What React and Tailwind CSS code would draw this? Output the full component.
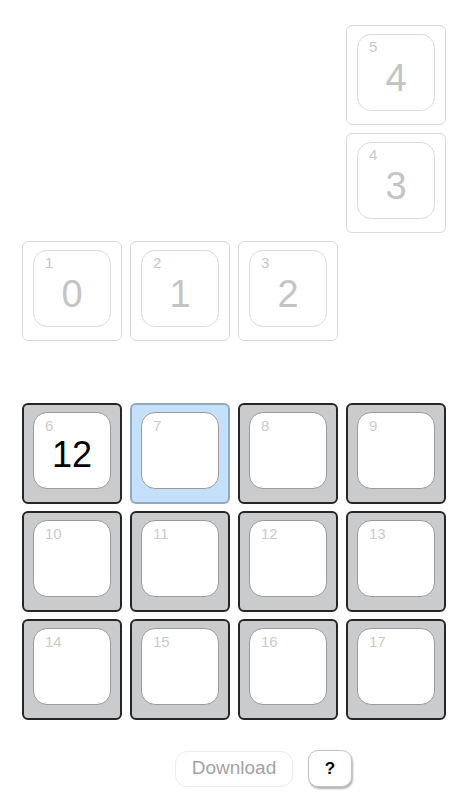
import React from 'react';

const font = { fontFamily: '"Liberation Sans", Arial, Helvetica, sans-serif' };

// faded placeholder tile (the ones above the board)
const GhostTile = ({ label, value }) => (
  <div className="w-[100px] h-[100px] rounded-[6px] border border-[#d9d9d9] bg-white px-[10px] pt-[8px]">
    <div className="relative w-full h-[77px] rounded-[14px] border border-[#dcdcdc] flex items-center justify-center pt-[10px]">
      <span className="absolute left-[11px] top-[4px] text-[15px] leading-none text-[#c9c9c9]">{label}</span>
      <span className="text-[38px] leading-none text-[#c4c4c4]">{value}</span>
    </div>
  </div>
);

// board cell
const Cell = ({ label, value, active }) => (
  <div
    className={`w-[100px] h-[101px] rounded-[6px] border-2 px-[9px] pt-[7px] ${
      active ? 'bg-[#c4e0fa] border-[#8ea9c4]' : 'bg-[#c9cbcc] border-[#262626]'
    }`}
  >
    <div className="relative w-full h-[77px] rounded-[14px] border border-[#9b9b9b] bg-white flex items-center justify-center pt-[9px]">
      <span className="absolute left-[11px] top-[5px] text-[15px] leading-none text-[#cbcbcb]">{label}</span>
      {value && <span className="text-[36px] leading-none text-black">{value}</span>}
    </div>
  </div>
);

export default function App() {
  const cells = [
    { label: 6, value: '12' },
    { label: 7, active: true },
    { label: 8 },
    { label: 9 },
    { label: 10 },
    { label: 11 },
    { label: 12 },
    { label: 13 },
    { label: 14 },
    { label: 15 },
    { label: 16 },
    { label: 17 },
  ];

  return (
    <div className="w-[472px] min-h-[800px] bg-white pl-[22px] pt-[25px]" style={font}>
      {/* stacked pieces */}
      <div className="grid grid-cols-[repeat(4,100px)] auto-rows-[100px] gap-[8px]">
        <div className="col-start-4">
          <GhostTile label={5} value="4" />
        </div>
        <div className="col-start-4">
          <GhostTile label={4} value="3" />
        </div>
        <GhostTile label={1} value="0" />
        <GhostTile label={2} value="1" />
        <GhostTile label={3} value="2" />
      </div>

      {/* board */}
      <div className="mt-[62px] grid grid-cols-[repeat(4,100px)] auto-rows-[101px] gap-x-[8px] gap-y-[7px]">
        {cells.map((c) => (
          <Cell key={c.label} {...c} />
        ))}
      </div>

      <div className="flex items-center gap-[15px] pl-[153px] mt-[30px]">
        <button className="w-[118px] h-[36px] rounded-[12px] border border-[#ececec] bg-white text-[19px] text-[#a3a3a3]">
          Download
        </button>
        <button className="w-[44px] h-[37px] rounded-[10px] border border-[#c4c4c4] bg-white text-[17px] font-bold text-black shadow-[1px_2px_2px_rgba(0,0,0,0.3)]">
          ?
        </button>
      </div>
    </div>
  );
}
